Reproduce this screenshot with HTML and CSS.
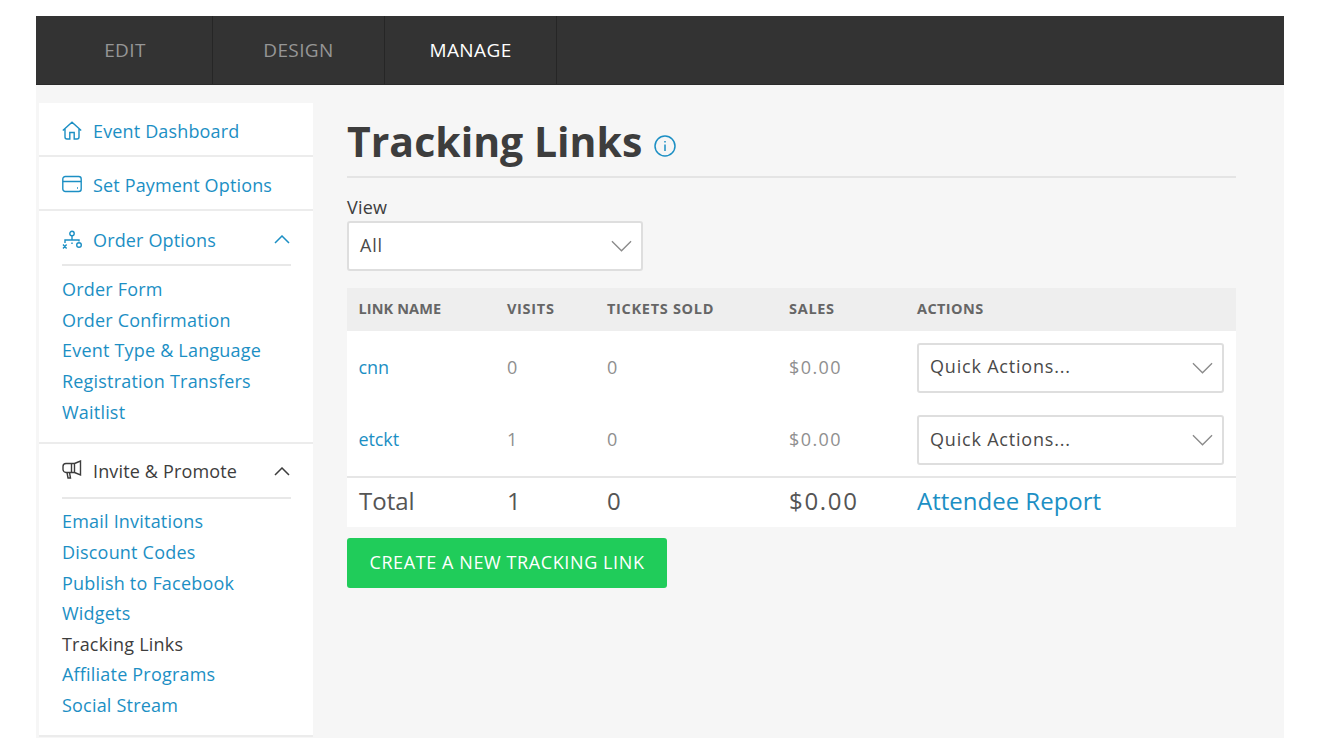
FILE: index.html
```html
<!DOCTYPE html>
<html lang="en">
<head>
<meta charset="utf-8">
<title>Tracking Links</title>
<link rel="stylesheet" href="styles.css">
</head>
<body>
<div class="app">
  <nav class="topnav">
    <a class="tab tab-edit">EDIT</a>
    <a class="tab tab-design">DESIGN</a>
    <a class="tab tab-manage active">MANAGE</a>
  </nav>
  <div class="body">
    <aside class="sidebar">
      <a class="side-row link">
        <svg class="ico" viewBox="0 0 20 20"><path d="M.8 9.500 10 1.200l9.200 8.300M3 7.500V16a2 2 0 0 0 2 2h2.800v-6.500h4.400V18H15a2 2 0 0 0 2-2V7.500"/></svg>
        <span>Event Dashboard</span>
      </a>
      <a class="side-row link">
        <svg class="ico" viewBox="0 0 20 20"><rect x=".8" y="1.500" width="18.400" height="15" rx="2.500"/><path d="M.8 6.500h18.400M15 13h1"/></svg>
        <span>Set Payment Options</span>
      </a>
      <section class="side-group">
        <div class="group-head head-order link">
          <svg class="ico" viewBox="0 0 20 20"><circle cx="10" cy="3.500" r="2.200"/><path d="M10 5.700V10M3 13V10h14v1.500"/><circle cx="17" cy="15" r="2.300"/><path d="M1 14.500l3.600 4M4.600 14.500l-3.600 4M10 12.500v1.500"/></svg>
          <span>Order Options</span>
          <svg class="chev" viewBox="0 0 16 9"><path d="M1 8l7-7 7 7"/></svg>
        </div>
        <ul class="sub">
          <li><a>Order Form</a></li>
          <li><a>Order Confirmation</a></li>
          <li><a>Event Type &amp; Language</a></li>
          <li><a>Registration Transfers</a></li>
          <li><a>Waitlist</a></li>
        </ul>
      </section>
      <section class="side-group">
        <div class="group-head dark">
          <svg class="ico ico-up" viewBox="0 0 20 20"><path d="M1 6.500C1 4.500 2.500 3.500 4 3.500h8.500V12.500H4C2.500 12.500 1 11 1 9.500zM12.500 3.500 18.500 1v14l-6-2.500M5 12.500l1 5.500h2.500l-1-5.500M9.500 3.500v9"/></svg>
          <span>Invite &amp; Promote</span>
          <svg class="chev" viewBox="0 0 16 9"><path d="M1 8l7-7 7 7"/></svg>
        </div>
        <ul class="sub sub-tight">
          <li><a>Email Invitations</a></li>
          <li><a>Discount Codes</a></li>
          <li><a>Publish to Facebook</a></li>
          <li><a>Widgets</a></li>
          <li><a class="current">Tracking Links</a></li>
          <li><a>Affiliate Programs</a></li>
          <li><a>Social Stream</a></li>
        </ul>
      </section>
    </aside>
    <main class="main">
      <header class="title-row">
        <h1>Tracking Links</h1>
        <svg class="info" viewBox="0 0 22 22"><circle cx="11" cy="11" r="10"/><path d="M11 9.500v6.500M11 6v1.600"/></svg>
      </header>
      <label class="view-label">View</label>
      <div class="select view-select"><span>All</span><svg class="caret" viewBox="0 0 22 12"><path d="M1 1l10 10L21 1"/></svg></div>
      <table class="links">
        <thead>
          <tr><th class="c1">LINK NAME</th><th class="c2">VISITS</th><th class="c3">TICKETS SOLD</th><th class="c4">SALES</th><th class="c5">ACTIONS</th></tr>
        </thead>
        <tbody>
          <tr>
            <td class="first"><a>cnn</a></td><td class="num">0</td><td class="num">0</td><td class="num">$0.00</td>
            <td class="act"><div class="select"><span>Quick Actions...</span><svg class="caret" viewBox="0 0 22 12"><path d="M1 1l10 10L21 1"/></svg></div></td>
          </tr>
          <tr>
            <td class="first"><a>etckt</a></td><td class="num">1</td><td class="num">0</td><td class="num">$0.00</td>
            <td class="act"><div class="select"><span>Quick Actions...</span><svg class="caret" viewBox="0 0 22 12"><path d="M1 1l10 10L21 1"/></svg></div></td>
          </tr>
        </tbody>
        <tfoot>
          <tr><td>Total</td><td class="fig">1</td><td class="fig">0</td><td class="fig">$0.00</td><td><a>Attendee Report</a></td></tr>
        </tfoot>
      </table>
      <button class="create">CREATE A NEW TRACKING LINK</button>
    </main>
  </div>
</div>
</body>
</html>
```
FILE: styles.css
```css
* { box-sizing: border-box; }
html, body { margin: 0; background: #fff; }
body {
  padding: 16px 36px 8px;
  font-family: "Open Sans", "Liberation Sans", sans-serif;
  color: #3d3d3d;
  height: 746px;
  overflow: hidden;
}
a { color: #1c8fc4; text-decoration: none; }
.app { width: 1248px; height: 722px; background: #f6f6f6; display: flex; flex-direction: column; }
.topnav { height: 69px; background: #333; display: flex; border-bottom: 1px solid #2a2a2a; }
.tab {
  width: 172px; display: flex; align-items: center; justify-content: center;
  font-size: 19px; letter-spacing: .4px; color: #969696; border-right: 1px solid #262626; padding-bottom: 1px;
}
.tab-edit { width: 177px; padding-left: 2px; }
.tab.active { color: #fff; }
.body { flex: 1; display: flex; padding: 18px 48px 0 3px; gap: 34px; }
.sidebar { width: 274px; height: 634px; background: #fff; flex: none; }
.side-row, .group-head {
  display: flex; align-items: center; height: 54px; padding: 3px 22px 0 23px;
  font-size: 18px; letter-spacing: .15px; border-bottom: 2px solid #ececec;
}
.side-group { border-bottom: 2px solid #ececec; padding-bottom: 15px; }
.group-head { height: 55px; border-bottom: 0; position: relative; padding: 0 23px 1px; }
.head-order { padding: 2px 23px 0; }
.group-head::after { content: ""; position: absolute; left: 23px; right: 22px; bottom: 0; height: 2px; background: #e8e8e8; }
.dark { color: #3d3d3d; }
.link { color: #1c8fc4; }
.ico { width: 20px; height: 20px; margin-right: 11px; fill: none; stroke: currentColor; stroke-width: 1.4; flex: none; }
.ico-up { margin-top: -3px; }
.chev { width: 16px; height: 9px; margin-left: auto; fill: none; stroke: currentColor; stroke-width: 1.5; }
.sub { list-style: none; margin: 0; padding: 8px 0 0 23px; }
.sub-tight { padding-top: 7px; }
.sub-tight li { height: 30.55px; line-height: 30.55px; }
.sub li { font-size: 18px; letter-spacing: .2px; }
.sub:not(.sub-tight) li { height: 30.7px; line-height: 30.7px; }
.sub .current { color: #3d3d3d; }
.main { flex: 1; min-width: 0; }
.title-row { height: 75px; display: flex; align-items: center; border-bottom: 2px solid #e4e4e4; gap: 12px; padding-top: 2px; }
h1 { margin: 0; font-size: 41px; font-weight: 700; color: #3d3d3d; }
.info { width: 22px; height: 22px; fill: none; stroke: #1c8fc4; stroke-width: 1.5; margin-top: 10px; }
.view-label { display: block; margin-top: 17px; height: 26px; line-height: 25px; font-size: 18px; letter-spacing: .2px; }
.select {
  height: 50px; background: #fff; border: 2px solid #dedede; border-radius: 3px;
  display: flex; align-items: center; justify-content: space-between;
  padding: 0 9px 3px 11px; font-size: 18px; letter-spacing: .8px; color: #4a4a4a;
}
.caret { margin-top: 3px; }
.view-select { width: 296px; }
.caret { width: 21px; height: 12px; fill: none; stroke: #8a8a8a; stroke-width: 1.4; }
.links { width: 889px; margin-top: 17px; border-collapse: collapse; table-layout: fixed; }
.links th {
  background: #eee; height: 43px; padding: 0 0 2px 12px; text-align: left;
  font-size: 14.5px; font-weight: 700; color: #666; letter-spacing: .7px;
}
.links th.c1 { padding-left: 11.5px; letter-spacing: .1px; }
.links th.c5 { letter-spacing: .4px; }
.links td { background: #fff; height: 73px; padding: 0 0 2px 12px; font-size: 18px; }
.links td.first { padding-left: 11.5px; letter-spacing: -.1px; }
.c1 { width: 148px; } .c2 { width: 100px; } .c3 { width: 182px; } .c4 { width: 128px; }
.links .num { color: #8f8f8f; letter-spacing: 1.400px; }
.links td.act { padding: 0 0 0 12px; }
.links td .select { width: 307px; }
.links tfoot td { height: 50px; padding-bottom: 4px; border-top: 2px solid #e6e6e6; font-size: 24px; color: #555; }
.links tfoot td.fig { letter-spacing: 1.700px; }
.create {
  display: block; margin-top: 11px; width: 320px; height: 50px; border: 0; border-radius: 3px; padding-bottom: 4px;
  background: #20cc5a; color: #fff; font: inherit; font-size: 18px; letter-spacing: .6px;
}
```
